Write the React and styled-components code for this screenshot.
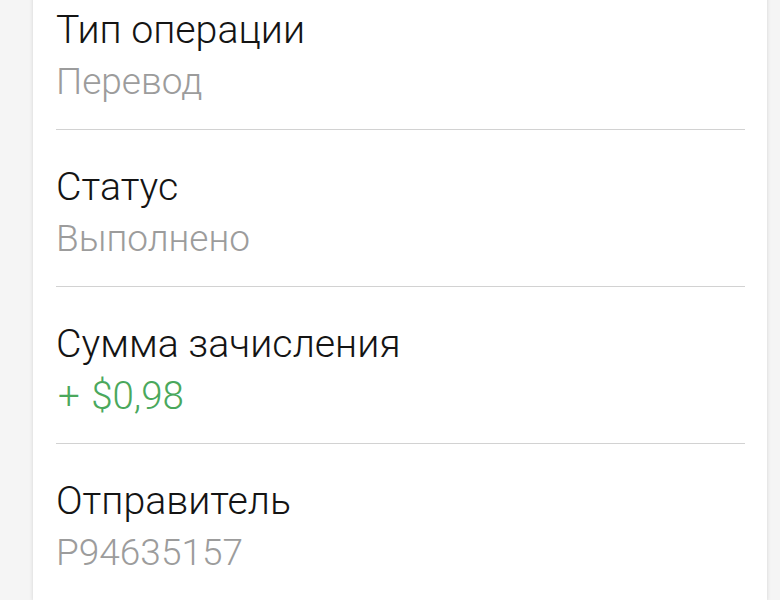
import React from "react";
import styled, { createGlobalStyle } from "styled-components";

const GlobalStyle = createGlobalStyle`
  html, body {
    margin: 0;
    padding: 0;
    background: #f5f5f5;
    font-family: Roboto, "Noto Sans", "Liberation Sans", sans-serif;
    overflow: hidden;
  }
`;

const Page = styled.div`
  width: 780px;
  height: 600px;
  overflow: hidden;
`;

const Card = styled.div`
  margin: -27px 0 0 33px;
  width: 734px;
  background: #fff;
  box-shadow: 0 0 4px rgba(0, 0, 0, 0.14);
`;

const Row = styled.div`
  margin: 0 22px 0 23px;
  padding: 35px 0 25px;
  border-bottom: 1px solid #d2d2d2;
`;

const Label = styled.div`
  font-size: 39.3px;
  font-weight: 300;
  line-height: 44px;
  color: #141414;
`;

const Value = styled.div`
  margin-top: 8px;
  font-size: ${(p) => (p.positive ? "38.5px" : "37px")};
  font-weight: 300;
  line-height: 44px;
  color: ${(p) => (p.positive ? "#4aa85c" : "#9c9c9c")};
  ${(p) => p.positive && "padding-left: 2px; word-spacing: 2px;"}
`;

const fields = [
  { label: "Тип операции", value: "Перевод" },
  { label: "Статус", value: "Выполнено" },
  { label: "Сумма зачисления", value: "+ $0,98", positive: true },
  { label: "Отправитель", value: "P94635157" },
];

export default function App() {
  return (
    <Page>
      <GlobalStyle />
      <Card>
        {fields.map((f) => (
          <Row key={f.label}>
            <Label>{f.label}</Label>
            <Value positive={f.positive}>{f.value}</Value>
          </Row>
        ))}
      </Card>
    </Page>
  );
}
